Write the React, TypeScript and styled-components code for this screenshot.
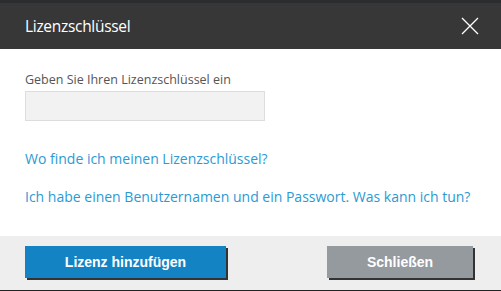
import React from "react";
import styled, { createGlobalStyle } from "styled-components";

const Global = createGlobalStyle`
  html, body { margin: 0; padding: 0; background: #ffffff; }
  * { box-sizing: border-box; }
`;

const Dialog = styled.div`
  width: 501px;
  height: 291px;
  display: flex;
  flex-direction: column;
  background: #ffffff;
  font-family: "Open Sans", "Noto Sans", sans-serif;
`;

const Header = styled.div`
  height: 49px;
  border-top: 3px solid #2b2d2f;
  background: #373737;
  display: flex;
  align-items: center;
  justify-content: space-between;
  padding: 0 22px 0 25px;
`;

const Title = styled.h1`
  margin: 0;
  font-size: 15.5px;
  font-weight: 400;
  color: #ffffff;
  letter-spacing: -0.3px;
`;

const CloseButton = styled.button`
  border: 0;
  background: transparent;
  padding: 0;
  width: 18px;
  height: 18px;
  display: flex;
  cursor: pointer;
`;

const Body = styled.div`
  flex: 1;
  padding: 22px 25px 0 25px;
  display: flex;
  flex-direction: column;
`;

const Label = styled.label`
  font-size: 12.5px;
  color: #555555;
  line-height: 18px;
`;

const KeyInput = styled.input`
  margin-top: 2px;
  width: 240px;
  height: 30px;
  background: #f2f2f2;
  border: 1px solid #dddddd;
  outline: none;
`;

const Link = styled.a<{ $gap: number }>`
  margin-top: ${(p) => p.$gap}px;
  font-size: 14px;
  color: #2b9ad4;
  text-decoration: none;
  line-height: 20px;
  cursor: pointer;
`;

const Footer = styled.div`
  height: 55px;
  background: #eeeeee;
  border-bottom: 1px solid #222222;
  padding: 10px 28px 0 25px;
  display: flex;
  justify-content: space-between;
  align-items: flex-start;
`;

const Button = styled.button<{ $variant: "primary" | "secondary" }>`
  height: 32px;
  width: ${(p) => (p.$variant === "primary" ? 201 : 146)}px;
  border: 0;
  background: ${(p) => (p.$variant === "primary" ? "#1383c3" : "#959a9f")};
  box-shadow: 2px 2px 0 #333333;
  color: #ffffff;
  font-family: "Liberation Sans", Arial, sans-serif;
  font-weight: 700;
  font-size: 14px;
  cursor: pointer;
`;

export default function App() {
  return (
    <>
      <Global />
      <Dialog>
        <Header>
          <Title>Lizenzschlüssel</Title>
          <CloseButton aria-label="Schließen">
            <svg width="18" height="18" viewBox="0 0 18 18">
              <path d="M1 1 L17 17 M17 1 L1 17" stroke="#ffffff" strokeWidth="1.3" fill="none" />
            </svg>
          </CloseButton>
        </Header>
        <Body>
          <Label>Geben Sie Ihren Lizenzschlüssel ein</Label>
          <KeyInput type="text" />
          <Link $gap={28}>Wo finde ich meinen Lizenzschlüssel?</Link>
          <Link $gap={18}>Ich habe einen Benutzernamen und ein Passwort. Was kann ich tun?</Link>
        </Body>
        <Footer>
          <Button $variant="primary">Lizenz hinzufügen</Button>
          <Button $variant="secondary">Schließen</Button>
        </Footer>
      </Dialog>
    </>
  );
}
